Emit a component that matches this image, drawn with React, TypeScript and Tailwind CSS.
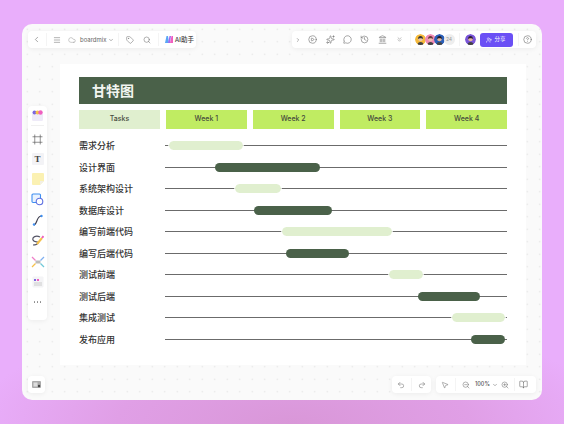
import React from "react";
import { ChevronLeft, ChevronRight, ChevronDown, ChevronsDown, Menu, Cloud, Tag, Search, CirclePlay, MessageCircle, History, Landmark, CircleHelp, Undo2, Redo2, MousePointer2, ZoomIn, ZoomOut, BookOpen, UserPlus, Frame, Sparkles } from "lucide-react";

const rows: [string, number, number, boolean][] = [
  ["需求分析", 169, 243, false],
  ["设计界面", 215, 320, true],
  ["系统架构设计", 235, 281, false],
  ["数据库设计", 254, 332, true],
  ["编写前端代码", 282, 392, false],
  ["编写后端代码", 286, 349, true],
  ["测试前端", 389, 423, false],
  ["测试后端", 418, 480, true],
  ["集成测试", 452, 505, false],
  ["发布应用", 471, 505, true],
];

function Face({ bg, skin, hair }: { bg: string; skin: string; hair: string }) {
  return (
    <svg width="11" height="11" viewBox="0 0 11 11" className="rounded-full shrink-0">
      <circle cx="5.5" cy="5.5" r="5.5" fill={bg} />
      <path d="M2.5 11c0-2 1.3-3 3-3s3 1 3 3z" fill="#444" />
      <circle cx="5.5" cy="5" r="2.3" fill={skin} />
      <path d="M3 5c0-2 1-3 2.5-3S8 3 8 5C7 4 4 4 3 5z" fill={hair} />
    </svg>
  );
}

function Sep({ h = "h-[13px]" }: { h?: string }) {
  return <div className={`w-px ${h} bg-[#f4f4f4] shrink-0`} />;
}

const bar = "absolute bg-white rounded-[4px] shadow-[0_1px_5px_rgba(0,0,0,0.06)] flex items-center";

export default function App() {
  return (
    <div className="w-[564px] h-[424px] overflow-hidden bg-[radial-gradient(ellipse_320px_110px_at_52%_100%,#d997d8_0%,#e09fe6_55%,#e9aefb_100%)] bg-[#e9aefb] pt-[24px] pl-[22px] font-['Inter','Noto_Sans_CJK_SC',sans-serif]">
      <div className="relative w-[520px] h-[376px] rounded-[10px] bg-[#fafafa] bg-[radial-gradient(circle,#e2e2e2_0.7px,transparent_1px)] bg-[size:12.5px_12.5px] bg-[position:-1px_-1px] pt-[40px] pl-[38px] overflow-hidden">
        {/* canvas */}
        <div className="w-[466px] h-[301px] bg-white pt-[13px] pl-[19px]">
          <div className="w-[428px] h-[27px] bg-[#4a6149] text-[#f2f5f0] text-[14px] font-semibold flex items-center pl-[13px] font-['Noto_Sans_CJK_SC',sans-serif]">甘特图</div>
          <div className="w-[428px] mt-[6px] flex gap-[6px] text-[7px] font-medium text-[#454a3c] font-['Inter',sans-serif]">
            <div className="w-[81px] h-[19px] bg-[#e0efcf] flex items-center justify-center">Tasks</div>
            {["Week 1", "Week 2", "Week 3", "Week 4"].map((w) => (
              <div key={w} className="flex-1 h-[19px] bg-[#c0ec62] flex items-center justify-center">{w}</div>
            ))}
          </div>
          <div className="mt-[6px] w-[428px]">
            {rows.map(([name, a, b, dark]) => (
              <div key={name} className="h-[21.5px] flex items-center">
                <div className="w-[86px] text-[9px] font-medium text-[#333] font-['Noto_Sans_CJK_SC',sans-serif]">{name}</div>
                <div className="relative flex-1 h-[9px] flex items-center">
                  <div className="w-full h-px bg-[#6b6b6b]" />
                  <div
                    className={`absolute top-0 h-[9px] rounded-full ${dark ? "bg-[#4a6149]" : "bg-[#e0efcf] outline outline-1 outline-white"}`}
                    style={{ left: a - 165, width: b - a }}
                  />
                </div>
              </div>
            ))}
          </div>
        </div>

        {/* top left bar */}
        <div className={`${bar} left-[6px] top-[7px] w-[168px] h-[17px] text-[#666]`}>
          <ChevronLeft size={9} className="ml-[4px] shrink-0" strokeWidth={1.5} />
          <div className="ml-[5px]"><Sep /></div>
          <Menu size={8} className="ml-[6px] shrink-0" strokeWidth={1.5} />
          <Cloud size={8} className="ml-[7px] shrink-0 text-[#999]" strokeWidth={1.5} />
          <span className="ml-[4px] w-[26px] text-[6px] leading-none text-[#666]">boardmix</span>
          <ChevronDown size={6} className="ml-[2px] shrink-0" />
          <div className="ml-[4px]"><Sep /></div>
          <Tag size={8} className="ml-[7px] shrink-0" strokeWidth={1.5} />
          <Search size={8} className="ml-[9px] shrink-0" strokeWidth={1.5} />
          <div className="ml-[7px]"><Sep /></div>
          <svg width="8" height="7" viewBox="0 0 8 7" className="ml-[6px] shrink-0">
            <path d="M0 7 1.5 0H3L4 7z" fill="#5aa6f5" />
            <path d="M3 7 4.5 0H6L5 7z" fill="#a06bf0" />
            <path d="M5 7 6.5 0H8V7z" fill="#f15fc0" />
          </svg>
          <span className="ml-[2px] text-[6.5px] font-medium text-[#444] font-['Noto_Sans_CJK_SC',sans-serif]">AI助手</span>
        </div>

        {/* top right bar */}
        <div className={`${bar} left-[270px] top-[7px] w-[244px] h-[17px] text-[#666]`}>
          <ChevronRight size={6} className="ml-[3px] shrink-0" />
          <CirclePlay size={9} className="ml-[7px] shrink-0" strokeWidth={1.5} />
          <Sparkles size={9} className="ml-[9px] shrink-0" strokeWidth={1.5} />
          <MessageCircle size={9} className="ml-[8px] shrink-0" strokeWidth={1.5} />
          <History size={9} className="ml-[8px] shrink-0" strokeWidth={1.5} />
          <Landmark size={9} className="ml-[9px] shrink-0" strokeWidth={1.5} />
          <ChevronsDown size={7} className="ml-[9px] shrink-0" strokeWidth={1.5} />
          <div className="ml-[7px]"><Sep /></div>
          <div className="ml-[4px] flex -space-x-[1.5px] items-center">
            <Face bg="#f5b93a" skin="#e9c6a8" hair="#333" />
            <Face bg="#f08ab5" skin="#eec0b0" hair="#6a3a3a" />
            <Face bg="#2b5fb8" skin="#e8b898" hair="#1d1d2b" />
            <div className="w-[11px] h-[11px] rounded-full bg-[#eee] text-[#999] text-[5px] flex items-center justify-center shrink-0">24</div>
          </div>
          <div className="ml-[4px]"><Sep /></div>
          <div className="ml-[5px]"><Face bg="#7a55d8" skin="#e8b898" hair="#2a1d3b" /></div>
          <div className="ml-[4px] w-[33px] h-[14px] rounded-[3px] bg-[#6a4ff5] text-white text-[5.5px] flex items-center justify-center gap-[2px] font-['Noto_Sans_CJK_SC',sans-serif] shrink-0">
            <UserPlus size={6} strokeWidth={2} />
            <span>分享</span>
          </div>
          <div className="ml-[5px]"><Sep /></div>
          <CircleHelp size={9} className="ml-[4px] shrink-0" strokeWidth={1.5} />
        </div>

        {/* left toolbar */}
        <div className={`${bar} left-[6px] top-[82px] w-[19px] h-[214px] flex-col text-[#555]`}>
          <svg width="13" height="13" viewBox="0 0 13 13" className="mt-[3px] shrink-0">
            <rect x="1" y="4" width="11" height="8" rx="1.5" fill="#eeeaf8" />
            <circle cx="3.5" cy="3.5" r="2" fill="#7b67e0" />
            <circle cx="6.5" cy="3.5" r="2" fill="#f5c04a" />
            <circle cx="9.5" cy="3.5" r="2.2" fill="#ef5fc0" />
          </svg>
          <div className="mt-[3px] w-[13px] h-px bg-[#f0f0f0] shrink-0" />
          <Frame size={11} className="mt-[8px] shrink-0 text-[#555]" strokeWidth={1.4} />
          <div className="mt-[8px] w-[12px] h-[12px] bg-[#f3f3f6] rounded-[1px] flex items-center justify-center text-[9px] font-bold text-[#444] shrink-0 font-['Liberation_Serif',serif] leading-none">T</div>
          <svg width="12" height="12" viewBox="0 0 12 12" className="mt-[8px] shrink-0">
            <path d="M1 0h10a1 1 0 0 1 1 1v7l-4 4H1a1 1 0 0 1-1-1V1a1 1 0 0 1 1-1z" fill="#fbf1b2" />
            <path d="M12 8H8v4z" fill="#f2efe6" />
          </svg>
          <svg width="13" height="13" viewBox="0 0 13 13" className="mt-[8px] shrink-0" fill="none">
            <rect x="1" y="1" width="8.5" height="8.5" rx="1" stroke="#3f8ff0" strokeWidth="1.1" fill="#eaf3fe" />
            <circle cx="8.5" cy="8.5" r="3.3" stroke="#5d6fe0" strokeWidth="1.1" fill="#fff" />
          </svg>
          <svg width="12" height="12" viewBox="0 0 12 12" className="mt-[8px] shrink-0" fill="none">
            <path d="M2 11C5 11 4.5 2.5 9 2" stroke="#445" strokeWidth="1.2" />
            <circle cx="2" cy="10.5" r="1.2" fill="#3f8ff0" />
            <circle cx="9.5" cy="2" r="1.2" fill="#3f8ff0" />
          </svg>
          <svg width="13" height="12" viewBox="0 0 13 12" className="mt-[9px] shrink-0" fill="none">
            <path d="M9 2C5 0 1 2 2 5s6 1 5 3-4 2-5 2" stroke="#556" strokeWidth="1.2" />
            <path d="M6 9 11 3" stroke="#f5c04a" strokeWidth="2" />
            <path d="M11 3 12.5 1" stroke="#ef5fc0" strokeWidth="2" />
          </svg>
          <svg width="14" height="12" viewBox="0 0 14 12" className="mt-[9px] shrink-0" fill="none">
            <rect x="4.5" y="4.5" width="5" height="3" fill="#bbb" />
            <path d="M1 1 4.5 4.5" stroke="#ef7fc8" strokeWidth="1.2" />
            <path d="M13 1 9.5 4.5" stroke="#7fb0f0" strokeWidth="1.2" />
            <path d="M1 11 4.5 7.5" stroke="#f5c04a" strokeWidth="1.2" />
            <path d="M13 11 9.5 7.5" stroke="#70c8d8" strokeWidth="1.2" />
          </svg>
          <svg width="12" height="12" viewBox="0 0 12 12" className="mt-[8px] shrink-0">
            <rect x="0.5" y="0.5" width="11" height="11" rx="1" fill="#f4f4f6" />
            <rect x="2" y="3" width="2" height="2" fill="#7b67e0" />
            <rect x="5" y="3" width="2" height="2" fill="#ef5fc0" />
            <rect x="2" y="6.5" width="8" height="1" fill="#ccc" />
            <rect x="2" y="8.5" width="8" height="1" fill="#ccc" />
          </svg>
          <div className="mt-[13px] flex gap-[1.5px] shrink-0">
            <i className="w-[1.5px] h-[1.5px] bg-[#888] rounded-full" />
            <i className="w-[1.5px] h-[1.5px] bg-[#888] rounded-full" />
            <i className="w-[1.5px] h-[1.5px] bg-[#888] rounded-full" />
          </div>
        </div>

        {/* bottom left */}
        <div className={`${bar} left-[6px] top-[352px] w-[17px] h-[17px] justify-center`}>
          <svg width="9" height="7" viewBox="0 0 9 7">
            <rect width="9" height="7" rx="1" fill="#aaa" />
            <rect x="1.5" y="1.5" width="4" height="4" fill="#ddd" />
            <circle cx="7" cy="5" r="1.2" fill="#444" />
          </svg>
        </div>

        {/* undo/redo */}
        <div className={`${bar} left-[370px] top-[352px] w-[39px] h-[17px] text-[#666]`}>
          <Undo2 size={8} className="ml-[5px] shrink-0" strokeWidth={1.5} />
          <div className="ml-[6px]"><Sep /></div>
          <Redo2 size={8} className="ml-[6px] shrink-0" strokeWidth={1.5} />
        </div>

        {/* zoom bar */}
        <div className={`${bar} left-[414px] top-[352px] w-[100px] h-[17px] text-[#666]`}>
          <MousePointer2 size={8} className="ml-[5px] shrink-0" strokeWidth={1.5} />
          <div className="ml-[6px]"><Sep /></div>
          <ZoomOut size={8} className="ml-[6px] shrink-0" strokeWidth={1.5} />
          <span className="ml-[5px] text-[5.5px] font-medium text-[#555]">100%</span>
          <ChevronDown size={6} className="ml-[2px] shrink-0" />
          <ZoomIn size={8} className="ml-[3px] shrink-0" strokeWidth={1.5} />
          <div className="ml-[5px]"><Sep /></div>
          <BookOpen size={9} className="ml-[4px] shrink-0" strokeWidth={1.5} />
        </div>
      </div>
    </div>
  );
}
